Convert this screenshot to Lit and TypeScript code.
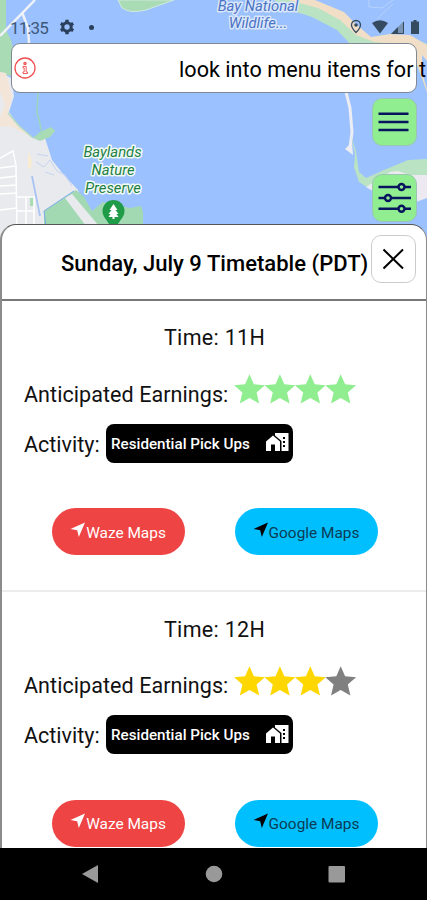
import { LitElement, html, svg, css } from "lit";
import { customElement, property } from "lit/decorators.js";

const STAR = "M15.5 0.3L19.9 10.2L30.9 11.2L22.6 18.5L25.2 29.6L15.5 24L5.8 29.6L8.4 18.5L0.1 11.2L11.1 10.2Z";

@customElement("map-canvas")
export class MapCanvas extends LitElement {
  static styles = css`
    :host { display: block; }
    svg { display: block; width: 427px; height: 240px; }
    .label { font-family: Roboto, sans-serif; font-style: italic; font-weight: 400; font-size: 14.8px; text-anchor: middle; paint-order: stroke; stroke-width: 3px; stroke-linejoin: round; }
    .water { fill: #4a73c4; stroke: #dbe7fb; }
    .park { fill: #1f7f45; stroke: #f2fbf5; }
  `;
  render() {
    return html`<svg viewBox="0 0 427 240">
      <rect width="427" height="240" fill="#9bc1ff" />
      <path d="M0 0H6V30L11 40L13 48V76L0 74Z" fill="#a9dcb5" />
      <path d="M0 72L11 78L14 96L9 112L18 125L33 138L44 135L52 160L64 175L78 190L90 226V240H0Z" fill="#e9eaee" />
      <path d="M0 72L6 73L10 90L12 98L8 112L20 128L30 137L12 127L0 126V118L5 104L0 92Z" fill="#f3e6d8" />
      <path d="M8 113L19 126L33 138" stroke="#b3dcc0" stroke-width="1.5" fill="none" />
      <path d="M33 138L40 132L51 127L55 131L50 137L40 141Z" fill="#a9dcb5" />
      <path d="M44 211L76 190L84 197L92 211L103 202L130 208L141 206L143 212V240H44Z" fill="#a3d9b2" />
      <path d="M65 198L72 194L99 226H86Z" fill="#e9eaee" />
      <path d="M44 211L74 191M44 211L46 226" stroke="#78abed" fill="none" />
      <path d="M30 197H34V206H30Z" fill="#a9dcb5" />
      <path d="M28 152L32 160L31 169L28 168Z" fill="#f7ecd2" />
      <path d="M0 36L35 0M22 12L28 28L29 43" stroke="#f0f2f7" stroke-width="2.5" fill="none" />
      <path d="M38 92L37 112L40 124L42 134" stroke="#9bd6bd" stroke-width="1.5" fill="none" />
      <path d="M0 158L13 151L16 165L17 240M0 168L15 166M0 178L17 176M0 186L17 185M0 194L17 193M0 210L17 208M17 197H34V226M26 197V226M17 211H34" stroke="#fff" stroke-width="1.5" fill="none" />
      <path d="M32 176L36 196L40 216" stroke="#a9c4f2" stroke-width="1.8" fill="none" />
      <path d="M36 162L44 167L50 160L57 171L65 175L72 186M37 154L48 156M45 172L54 175" stroke="#c5d4f0" fill="none" />
      <path d="M118 0L122 8Q130 14 146 10L174 0Z" fill="#a9dcb5" stroke="#cfe8e0" />
      <path d="M274 0H312L340 13L356 27L374 39L405 35L427 44V92L415 60L400 46L352 46L337 30L312 17L290 10Z" fill="#b9e3c3" />
      <path d="M288 0H315L344 12L357 25L371 37L390 34L410 35L427 45V92L418 66L413 50L400 44L374 42L356 35L340 20L318 8Z" fill="#f0dfc6" />
      <path d="M422 55L427 61V90L423 76Z" fill="#9bc1ff" />
      <path d="M369 0V7L382 8L393 0M377 19L393 4" stroke="#b9d2fa" fill="none" />
      <path d="M346 92L350 108L352 132L350 148" stroke="#eceef4" stroke-width="3" fill="none" />
      <path d="M345 149L352 142L353 155Z" fill="#eeeef2" />
      <path d="M351 135L356 151L359 172L366 178L384 170L408 160L427 159V176L405 176L386 182L370 189L359 182L354 167L355 154Z" fill="#b9e3c3" />
      <path d="M366 187L390 172L398 171L410 175L427 175V198L413 203L378 194Z" fill="#eceaf0" />
      <text class="label water" x="258" y="10.500">Bay National</text>
      <text class="label water" x="258" y="28">Wildlife...</text>
      <text class="label park" x="112.500" y="157">Baylands</text>
      <text class="label park" x="113" y="175">Nature</text>
      <text class="label park" x="113" y="192.5">Preserve</text>
      <circle cx="113.500" cy="211" r="11" fill="#209c48" />
      <path d="M104.500 217L113.500 231L122.500 217Z" fill="#209c48" />
      <path d="M113.500 204L117.500 210H115.500L118.500 214H116.500L118.500 217H114.500V219H112.500V217H108.500L110.500 214H108.500L111.500 210H109.500Z" fill="#fff" />
    </svg>`;
  }
}

@customElement("hour-card")
export class HourCard extends LitElement {
  @property() hour = "";
  @property({ type: Number }) stars = 0;
  @property() tone = "";
  static styles = css`
    :host { display: block; height: 291.5px; box-sizing: border-box; font-family: Roboto, sans-serif; color: #111; }
    .time { text-align: center; font-size: 21.5px; line-height: 26px; padding: 25px 0 0 1px; letter-spacing: 0.3px; }
    .row { display: flex; align-items: center; margin-left: 22px; font-size: 21.5px; white-space: nowrap; }
    .earn { height: 40px; margin-top: 19px; }
    .earn span { letter-spacing: 0.07px; padding-top: 8px; }
    .stars { display: block; width: 124px; height: 32px; margin-left: auto; margin-right: 68.5px; }
    .act { height: 40px; margin-top: 13px; }
    .act > span { width: 81.5px; padding-top: 2px; }
    .tag { display: flex; align-items: center; justify-content: space-between; box-sizing: border-box; width: 187px; height: 39px; padding: 0 4px 0 5.5px; border-radius: 8px; background: #000; color: #fff; font-size: 15.2px; font-weight: 500; }
    .tag > span { padding-top: 1px; }
    .tag svg { width: 24px; height: 20px; margin-bottom: 2px; }
    .links { display: flex; margin: 45px 0 0 49.5px; gap: 50px; }
    .btn { display: flex; align-items: center; justify-content: center; height: 47px; border-radius: 24px; font-size: 15.4px; white-space: nowrap; }
    .btn span { padding-top: 2px; }
    .btn svg { width: 16px; height: 16px; margin-bottom: 4px; }
    .waze { width: 133px; background: #ef4444; color: #fff; }
    .google { width: 143px; background: #00bfff; color: #0b3c54; }
  `;
  render() {
    const arrow = (c: string) => html`<svg viewBox="0 0 16 16"><path d="M15 0.500L0.500 7L7.200 8.200L8.800 15Z" fill=${c} /></svg>`;
    return html`
      <div class="time">Time: ${this.hour}</div>
      <div class="row earn"><span>Anticipated Earnings:</span>
        <svg class="stars" viewBox="0 0 124 32">
          ${[0, 1, 2, 3].map((i) => svg`<path transform="translate(${i * 30.4} 0)" d=${STAR} fill=${i < this.stars ? this.tone : "#808080"} />`)}
        </svg>
      </div>
      <div class="row act"><span>Activity:</span>
        <div class="tag"><span>Residential Pick Ups</span>
          <svg viewBox="0 0 24 20"><path d="M1 9.500L8 3.500L15 9.500V19H10V12.500H6V19H1Z" fill="#fff" /><path d="M10 1H23.500V19H16.500V9L10 3.500Z" fill="#fff" /><path d="M18 5h2v2h-2zM18 9h2v2h-2zM18 13h2v2h-2z" fill="#000" /></svg>
        </div>
      </div>
      <div class="links">
        <div class="btn waze">${arrow("#fff")}<span>Waze Maps</span></div>
        <div class="btn google">${arrow("#000")}<span>Google Maps</span></div>
      </div>`;
  }
}

@customElement("app-root")
export class AppRoot extends LitElement {
  static styles = css`
    :host { display: block; width: 427px; height: 900px; overflow: hidden; position: relative; font-family: Roboto, sans-serif; color: #000; }
    map-canvas { position: absolute; inset: 0 0 auto 0; }
    .screen { position: relative; display: flex; flex-direction: column; height: 900px; }
    .status { display: flex; align-items: center; height: 43px; box-sizing: border-box; padding: 11px 5px 0 10px; color: #3d5878; font-size: 17px; }
    .clock { width: 38px; letter-spacing: -0.9px; padding-top: 1px; }
    .gear { width: 16px; height: 16px; margin-left: 11px; }
    .dot { width: 5px; height: 5px; border-radius: 50%; background: #2a3f5c; margin-left: 13.5px; }
    .signals { width: 72px; height: 18px; margin-left: auto; }
    .banner { display: flex; align-items: center; height: 50px; box-sizing: border-box; margin: 0 10px 0 11px; border: 1px solid #808894; border-radius: 9px; background: #fff; padding-left: 2px; white-space: nowrap; font-size: 21.6px; }
    .banner svg { flex: none; width: 22px; height: 22px; margin-bottom: 1px; }
    .banner span { margin-left: 143px; padding-top: 2px; letter-spacing: 0.03px; }
    .tools { display: flex; flex-direction: column; align-items: flex-end; gap: 28px; height: 131px; padding: 5px 10px 0 0; box-sizing: border-box; }
    .tool { display: flex; align-items: center; justify-content: center; box-sizing: border-box; width: 45px; height: 48px; border: 1px solid #9bc7b0; border-radius: 10px; background: #90ee90; }
    .tool svg { width: 34px; height: 34px; }
    .sheet { display: flex; flex-direction: column; flex: 1; min-height: 0; box-sizing: border-box; border: 1px solid #555; border-width: 1px 1px 0 2px; border-left-color: #8b8b8b; border-right-color: #8b8b8b; border-radius: 16px 16px 0 0; background: #fff; overflow: hidden; }
    .head { display: flex; align-items: center; flex: none; height: 75.5px; box-sizing: border-box; border-bottom: 2px solid #777; padding-left: 59px; font-size: 22px; font-weight: 500; white-space: nowrap; }
    .title { width: 310px; padding-top: 3px; letter-spacing: 0.03px; }
    .close { display: flex; align-items: center; justify-content: center; box-sizing: border-box; width: 45px; height: 48px; border: 1px solid #ccc; border-radius: 10px; margin-bottom: 6px; }
    .close svg { width: 22px; height: 22px; }
    hour-card { flex: none; border-bottom: 2px solid #ececec; margin-top: -0.5px; }
    hour-card + hour-card { margin-top: 0; }
    .nav { display: flex; flex: none; align-items: center; justify-content: space-between; height: 52px; box-sizing: border-box; padding: 0 81px; background: #000; }
    .nav svg { width: 18px; height: 18px; fill: #999; }
  `;
  render() {
    return html`
      <map-canvas></map-canvas>
      <div class="screen">
        <div class="status">
          <span class="clock">11:35</span>
          <svg class="gear" viewBox="0 0 16 16" fill="none" stroke="#2a3f5c"><circle cx="8" cy="8" r="4.200" stroke-width="3" /><path d="M8 0.800V3M8 13V15.200M1.800 4.400L3.700 5.500M12.300 10.500L14.200 11.600M1.800 11.600L3.700 10.500M12.300 5.500L14.200 4.400" stroke-width="3.400" /></svg>
          <i class="dot"></i>
          <svg class="signals" viewBox="0 0 72 18">
            <path d="M6 2.500A4.500 4.500 0 0 0 1.500 7C1.500 10 6 14.500 6 14.500S10.500 10 10.500 7A4.500 4.500 0 0 0 6 2.500Z" fill="none" stroke="#344b60" stroke-width="1.300" /><circle cx="6" cy="7" r="1.800" fill="#344b60" />
            <path d="M22 5Q30 -0.500 38 5L30 15.500Z" fill="#344b60" />
            <path d="M54 3V16H41Z" fill="#7995b3" /><path d="M48 9V16H41Z" fill="#344b60" /><path d="M53.500 4V15.500H42" fill="none" stroke="#344b60" />
            <path d="M61 3.500H63.500V2H66.500V3.500H69V16H61Z" fill="#344b60" />
          </svg>
        </div>
        <div class="banner">
          <svg viewBox="0 0 22 22" fill="none" stroke="#f05050" stroke-width="1.300"><circle cx="11" cy="11" r="10" /><circle cx="11" cy="6.500" r="1.100" /><path d="M9 9.500H12.200V15H13.500V16.500H9V15H10.200V11H9Z" stroke-width="0.900" /></svg>
          <span>look into menu items for t</span>
        </div>
        <div class="tools">
          <div class="tool"><svg viewBox="0 0 34 34" stroke="#06155e" stroke-width="2.500"><path d="M0.500 8.700H30.500M0.500 17H30.500M0.500 25H30.500" /></svg></div>
          <div class="tool"><svg viewBox="0 0 34 34" stroke="#06155e" stroke-width="2.400" fill="#90ee90"><path d="M0.500 6H33M0.500 17H33M0.500 27.700H33" /><circle cx="23.500" cy="6" r="3" /><circle cx="10" cy="17" r="3" /><circle cx="23.500" cy="27.700" r="3" /></svg></div>
        </div>
        <div class="sheet">
          <div class="head">
            <span class="title">Sunday, July 9 Timetable (PDT)</span>
            <div class="close"><svg viewBox="0 0 22 22" stroke="#000" stroke-width="2"><path d="M0.500 1.500L20 20.500M20 1.500L0.500 20.500" /></svg></div>
          </div>
          <hour-card hour="11H" stars="4" tone="#90ee90"></hour-card>
          <hour-card hour="12H" stars="3" tone="#ffd700"></hour-card>
        </div>
        <div class="nav">
          <svg viewBox="0 0 18 18"><path d="M17 0V18L1 9Z" /></svg>
          <svg viewBox="0 0 18 18"><circle cx="9" cy="9" r="8.300" /></svg>
          <svg viewBox="0 0 18 18"><rect x="0.500" y="1" width="16.500" height="16.500" rx="1" /></svg>
        </div>
      </div>`;
  }
}
